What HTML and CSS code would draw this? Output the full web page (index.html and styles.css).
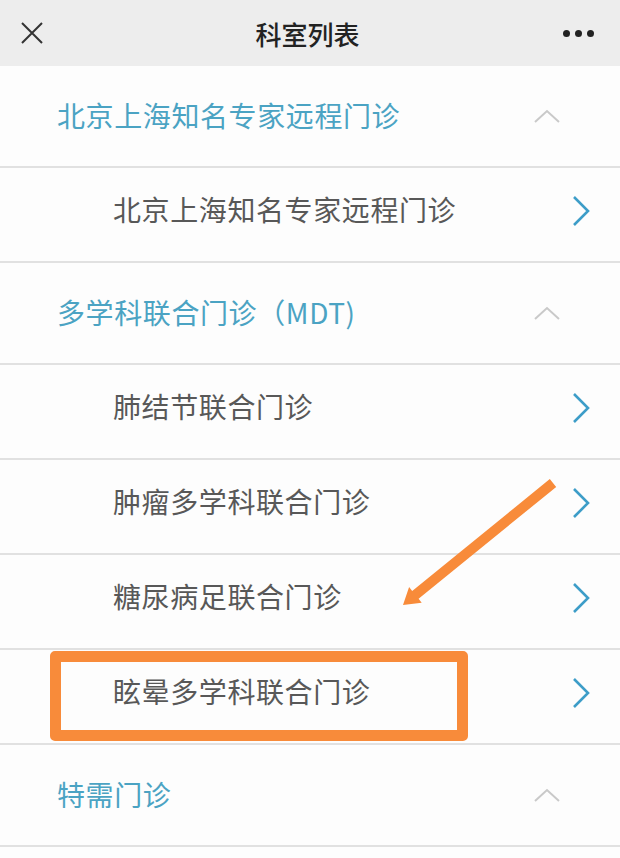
FILE: index.html
```html
<!DOCTYPE html>
<html lang="zh-CN">
<head>
<meta charset="UTF-8">
<meta name="viewport" content="width=device-width, initial-scale=1.0">
<title>科室列表</title>
<link rel="stylesheet" href="styles.css">
</head>
<body>
<header class="topbar">
  <svg class="close" width="24" height="24" viewBox="0 0 24 24"><path d="M2 2L22 22M22 2L2 22" stroke="#333" stroke-width="2" fill="none"/></svg>
  <h1>科室列表</h1>
  <span class="more"><i></i><i></i><i></i></span>
</header>
<main class="list">
  <section class="group">
    <div class="group-head"><span>北京上海知名专家远程门诊</span><svg class="up" width="26" height="14" viewBox="0 0 26 14"><path d="M1 13L13 2L25 13" stroke="#c9c9c9" stroke-width="2" fill="none"/></svg></div>
    <div class="item"><span>北京上海知名专家远程门诊</span><svg class="go" width="20" height="32" viewBox="0 0 20 32"><path d="M3 2L17 16L3 30" stroke="#3d9dc8" stroke-width="2.6" fill="none"/></svg></div>
  </section>
  <section class="group">
    <div class="group-head"><span>多学科联合门诊（MDT)</span><svg class="up" width="26" height="14" viewBox="0 0 26 14"><path d="M1 13L13 2L25 13" stroke="#c9c9c9" stroke-width="2" fill="none"/></svg></div>
    <div class="item"><span>肺结节联合门诊</span><svg class="go" width="20" height="32" viewBox="0 0 20 32"><path d="M3 2L17 16L3 30" stroke="#3d9dc8" stroke-width="2.6" fill="none"/></svg></div>
    <div class="item"><span>肿瘤多学科联合门诊</span><svg class="go" width="20" height="32" viewBox="0 0 20 32"><path d="M3 2L17 16L3 30" stroke="#3d9dc8" stroke-width="2.6" fill="none"/></svg></div>
    <div class="item"><span>糖尿病足联合门诊</span><svg class="go" width="20" height="32" viewBox="0 0 20 32"><path d="M3 2L17 16L3 30" stroke="#3d9dc8" stroke-width="2.6" fill="none"/></svg></div>
    <div class="item"><span>眩晕多学科联合门诊</span><svg class="go" width="20" height="32" viewBox="0 0 20 32"><path d="M3 2L17 16L3 30" stroke="#3d9dc8" stroke-width="2.6" fill="none"/></svg></div>
  </section>
  <section class="group">
    <div class="group-head"><span>特需门诊</span><svg class="up" width="26" height="14" viewBox="0 0 26 14"><path d="M1 13L13 2L25 13" stroke="#c9c9c9" stroke-width="2" fill="none"/></svg></div>
  </section>
</main>
<!-- annotation drawn over the list -->
<div class="mark-box"></div>
<svg class="mark-arrow" width="620" height="858" viewBox="0 0 620 858"><polygon points="549.8,479.1 412.2,591 409.1,587.1 403,605 421.7,602.7 418.6,598.8 556.2,486.9" fill="#f88b3a"/></svg>
</body>
</html>
```

FILE: styles.css
```css
body {
  margin:0;
  width:620px;
  height:858px;
  overflow:hidden;
  position:relative;
  background:#fdfdfd;
  font-family:"Noto Sans CJK SC", "Noto Sans", sans-serif;
}
.topbar {
  height:66px;
  background:#ededed;
  display:flex;
  align-items:center;
  justify-content:space-between;
  padding:0 26px 0 20px;
  box-sizing:border-box;
}
.topbar h1 {margin:0; font-size:26px; font-weight:500; color:#222; padding-left:8px;}
.close {display:block;}
.more {display:flex; gap:5px;}
.more i {width:7px; height:7px; border-radius:50%; background:#222;}
.group-head, .item {
  display:flex;
  align-items:center;
  justify-content:space-between;
  border-bottom:2px solid #e1e1e1;
  box-sizing:border-box;
}
.group-head {height:102px; padding:0 60px 2px 57px; color:#4ba3c3;}
.item {height:95px; padding:0 29px 12px 113px; color:#585858;}
.group-head span, .item span {font-size:28px; letter-spacing:0.6px;}
.up {margin-top:2px;}
.go {margin-top:4px;}
.mark-box {
  position:absolute;
  left:50px;
  top:651px;
  width:418px;
  height:90px;
  border:11px solid #f88b3a;
  border-radius:5px;
  box-sizing:border-box;
}
.mark-arrow {position:absolute; left:0; top:0;}
```
